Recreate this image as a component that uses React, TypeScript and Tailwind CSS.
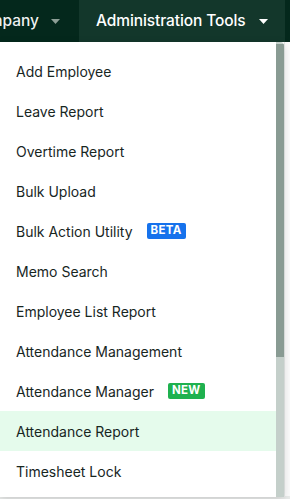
import React from "react";

const items: { label: string; badge?: "BETA" | "NEW"; active?: boolean }[] = [
  { label: "Add Employee" },
  { label: "Leave Report" },
  { label: "Overtime Report" },
  { label: "Bulk Upload" },
  { label: "Bulk Action Utility", badge: "BETA" },
  { label: "Memo Search" },
  { label: "Employee List Report" },
  { label: "Attendance Management" },
  { label: "Attendance Manager", badge: "NEW" },
  { label: "Attendance Report", active: true },
  { label: "Timesheet Lock" },
];

function Caret({ className }: { className?: string }) {
  return (
    <svg width="9" height="5" viewBox="0 0 9 5" className={`shrink-0 ${className ?? ""}`}>
      <path d="M0 0h9L4.5 5z" fill="currentColor" />
    </svg>
  );
}

export default function App() {
  return (
    <div
      className="relative w-[290px] h-[499px] overflow-hidden bg-white"
      style={{ fontFamily: "Inter, 'Noto Sans', sans-serif" }}
    >
      {/* top nav */}
      <div className="flex h-[42px] bg-[#04281c] text-white">
        <div className="flex items-center justify-end gap-[12px] w-[79px] pr-[19px] shrink-0 overflow-hidden whitespace-nowrap">
          <span className="text-[15.5px] font-medium text-white/95">Company</span>
          <Caret className="text-[#8d9e96]" />
        </div>
        <div className="flex items-center justify-between w-[206px] pl-[17px] pr-[17px] bg-[#13372b]">
          <span className="text-[15.5px] font-medium tracking-[-0.1px]">Administration Tools</span>
          <Caret className="text-white" />
        </div>
      </div>

      {/* page behind */}
      <div className="absolute right-0 top-[42px] bottom-0 w-[6px] border-l border-[#e6e9e8] bg-[#fbfbfb]" />
      <div className="absolute left-0 right-0 bottom-0 h-[3px] bg-[#e9ebea]" />

      {/* dropdown */}
      <div className="absolute left-0 top-[42px] w-[284px] h-[455px] bg-white rounded-tr-[4px] shadow-[0_2px_8px_rgba(0,0,0,0.15)] overflow-hidden flex">
        <div className="flex-1 pt-[9px] flex flex-col">
          {items.map((it) => (
            <div
              key={it.label}
              className={`h-[40px] flex items-center gap-[14px] pl-[16px] text-[14px] text-[#17261f] ${
                it.active ? "bg-[#e5fbec]" : ""
              }`}
            >
              <span>{it.label}</span>
              {it.badge === "BETA" && (
                <span className="h-[16px] px-[4px] flex items-center rounded-[2px] bg-[#1672ec] text-white text-[11.5px] font-bold tracking-[0.3px]">
                  BETA
                </span>
              )}
              {it.badge === "NEW" && (
                <span className="h-[16px] px-[4px] flex items-center rounded-[2px] bg-[#1fb14f] text-white text-[11.5px] font-bold tracking-[0.3px]">
                  NEW
                </span>
              )}
            </div>
          ))}
        </div>
        {/* scrollbar */}
        <div className="w-[8px] bg-[#c4cfca] flex flex-col">
          <div className="h-[313px] mt-[2px] bg-[#899b93]" />
        </div>
      </div>
    </div>
  );
}
